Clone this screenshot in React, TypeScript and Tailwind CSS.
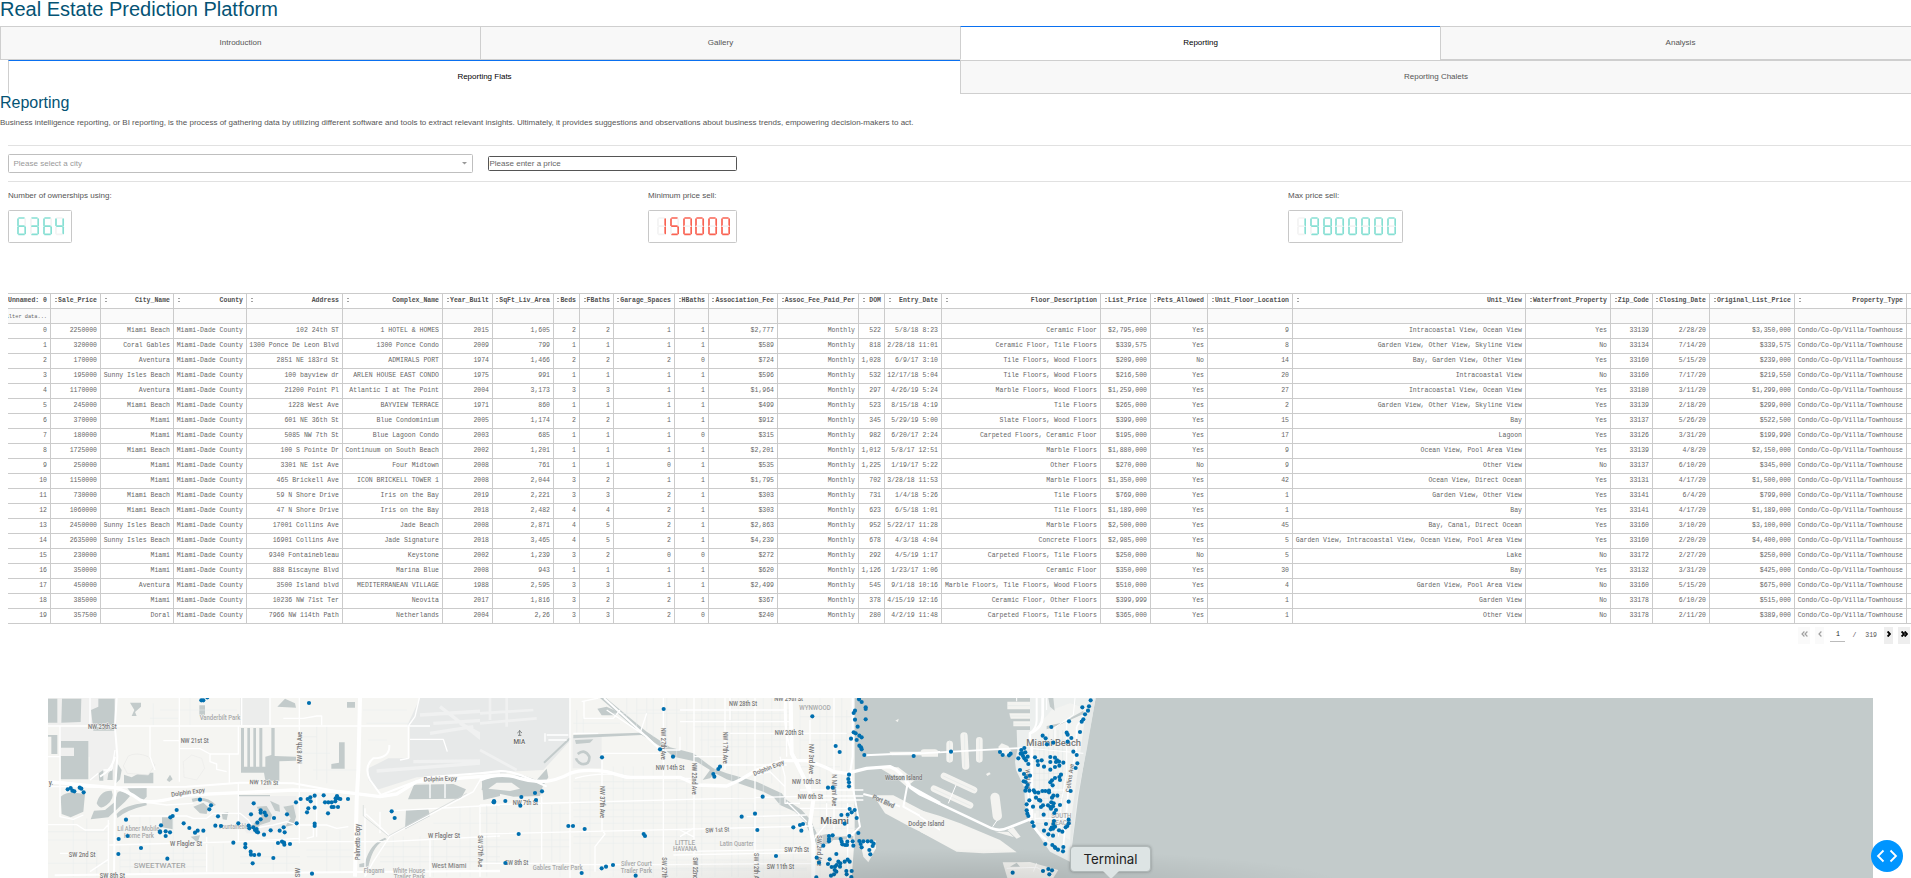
import type { ReactNode } from "react";

const COLUMNS: { name: string; width: number }[] = [
  { name: "Unnamed: 0", width: 43 },
  { name: "Sale_Price", width: 50 },
  { name: "City_Name", width: 73 },
  { name: "County", width: 73 },
  { name: "Address", width: 96 },
  { name: "Complex_Name", width: 100 },
  { name: "Year_Built", width: 50 },
  { name: "SqFt_Liv_Area", width: 61 },
  { name: "Beds", width: 26 },
  { name: "FBaths", width: 34 },
  { name: "Garage_Spaces", width: 61 },
  { name: "HBaths", width: 34 },
  { name: "Association_Fee", width: 69 },
  { name: "Assoc_Fee_Paid_Per", width: 81 },
  { name: "DOM", width: 26 },
  { name: "Entry_Date", width: 57 },
  { name: "Floor_Description", width: 159 },
  { name: "List_Price", width: 50 },
  { name: "Pets_Allowed", width: 57 },
  { name: "Unit_Floor_Location", width: 85 },
  { name: "Unit_View", width: 233 },
  { name: "Waterfront_Property", width: 85 },
  { name: "Zip_Code", width: 42 },
  { name: "Closing_Date", width: 57 },
  { name: "Original_List_Price", width: 85 },
  { name: "Property_Type", width: 112 },
];

const TYPE = "Condo/Co-Op/Villa/Townhouse";
const MD = "Miami-Dade County";

const ROWS: string[] = [
  `0|2250000|Miami Beach|${MD}|102 24th ST|1 HOTEL & HOMES|2015|1,605|2|2|1|1|$2,777|Monthly|522|5/8/18 8:23|Ceramic Floor|$2,795,000|Yes|9|Intracoastal View, Ocean View|Yes|33139|2/28/20|$3,350,000|${TYPE}`,
  `1|320000|Coral Gables|${MD}|1300 Ponce De Leon Blvd|1300 Ponce Condo|2009|799|1|1|1|1|$589|Monthly|818|2/28/18 11:01|Ceramic Floor, Tile Floors|$339,575|Yes|8|Garden View, Other View, Skyline View|No|33134|7/14/20|$339,575|${TYPE}`,
  `2|170000|Aventura|${MD}|2851 NE 183rd St|ADMIRALS PORT|1974|1,466|2|2|2|0|$724|Monthly|1,028|6/9/17 3:10|Tile Floors, Wood Floors|$209,000|No|14|Bay, Garden View, Other View|Yes|33160|5/15/20|$239,000|${TYPE}`,
  `3|195000|Sunny Isles Beach|${MD}|100 bayview dr|ARLEN HOUSE EAST CONDO|1975|991|1|1|1|1|$596|Monthly|532|12/17/18 5:04|Tile Floors, Wood Floors|$216,500|Yes|20|Intracoastal View|No|33160|7/17/20|$219,550|${TYPE}`,
  `4|1170000|Aventura|${MD}|21200 Point Pl|Atlantic I at The Point|2004|3,173|3|3|1|1|$1,964|Monthly|297|4/26/19 5:24|Marble Floors, Wood Floors|$1,259,000|Yes|27|Intracoastal View, Ocean View|Yes|33180|3/11/20|$1,299,000|${TYPE}`,
  `5|245000|Miami Beach|${MD}|1228 West Ave|BAYVIEW TERRACE|1971|860|1|1|1|1|$499|Monthly|523|8/15/18 4:19|Tile Floors|$265,000|Yes|2|Garden View, Other View, Skyline View|Yes|33139|2/18/20|$299,000|${TYPE}`,
  `6|370000|Miami|${MD}|601 NE 36th St|Blue Condominium|2005|1,174|2|2|1|1|$912|Monthly|345|5/29/19 5:00|Slate Floors, Wood Floors|$399,000|Yes|15|Bay|Yes|33137|5/26/20|$522,500|${TYPE}`,
  `7|180000|Miami|${MD}|5085 NW 7th St|Blue Lagoon Condo|2003|685|1|1|1|0|$315|Monthly|982|6/20/17 2:24|Carpeted Floors, Ceramic Floor|$195,000|Yes|17|Lagoon|Yes|33126|3/31/20|$199,990|${TYPE}`,
  `8|1725000|Miami Beach|${MD}|100 S Pointe Dr|Continuum on South Beach|2002|1,201|1|1|1|1|$2,201|Monthly|1,012|5/8/17 12:51|Marble Floors|$1,880,000|Yes|9|Ocean View, Pool Area View|Yes|33139|4/8/20|$2,150,000|${TYPE}`,
  `9|250000|Miami|${MD}|3301 NE 1st Ave|Four Midtown|2008|761|1|1|0|1|$535|Monthly|1,225|1/19/17 5:22|Other Floors|$270,000|No|9|Other View|No|33137|6/10/20|$345,000|${TYPE}`,
  `10|1150000|Miami|${MD}|465 Brickell Ave|ICON BRICKELL TOWER 1|2008|2,044|3|2|1|1|$1,795|Monthly|702|3/28/18 11:53|Marble Floors|$1,350,000|Yes|42|Ocean View, Direct Ocean|Yes|33131|4/17/20|$1,500,000|${TYPE}`,
  `11|730000|Miami Beach|${MD}|59 N Shore Drive|Iris on the Bay|2019|2,221|3|3|2|1|$303|Monthly|731|1/4/18 5:26|Tile Floors|$769,000|Yes|1|Garden View, Other View|Yes|33141|6/4/20|$799,000|${TYPE}`,
  `12|1060000|Miami Beach|${MD}|47 N Shore Drive|Iris on the Bay|2018|2,482|4|4|2|1|$303|Monthly|623|6/5/18 1:01|Tile Floors|$1,189,000|Yes|1|Bay|Yes|33141|4/17/20|$1,189,000|${TYPE}`,
  `13|2450000|Sunny Isles Beach|${MD}|17001 Collins Ave|Jade Beach|2008|2,871|4|5|2|1|$2,863|Monthly|952|5/22/17 11:28|Marble Floors|$2,500,000|Yes|45|Bay, Canal, Direct Ocean|Yes|33160|3/10/20|$3,100,000|${TYPE}`,
  `14|2635000|Sunny Isles Beach|${MD}|16901 Collins Ave|Jade Signature|2018|3,465|4|5|2|1|$4,239|Monthly|678|4/3/18 4:04|Concrete Floors|$2,985,000|Yes|5|Garden View, Intracoastal View, Ocean View, Pool Area View|Yes|33160|2/20/20|$4,400,000|${TYPE}`,
  `15|230000|Miami|${MD}|9340 Fontainebleau|Keystone|2002|1,239|3|2|0|0|$272|Monthly|292|4/5/19 1:17|Carpeted Floors, Tile Floors|$250,000|No|5|Lake|No|33172|2/27/20|$250,000|${TYPE}`,
  `16|350000|Miami|${MD}|888 Biscayne Blvd|Marina Blue|2008|943|1|1|1|1|$620|Monthly|1,126|1/23/17 1:06|Ceramic Floor|$350,000|Yes|30|Bay|Yes|33132|3/31/20|$425,000|${TYPE}`,
  `17|450000|Aventura|${MD}|3500 Island blvd|MEDITERRANEAN VILLAGE|1988|2,595|3|3|1|1|$2,499|Monthly|545|9/1/18 10:16|Marble Floors, Tile Floors, Wood Floors|$510,000|Yes|4|Garden View, Pool Area View|No|33160|5/15/20|$675,000|${TYPE}`,
  `18|385000|Miami|${MD}|10236 NW 71st Ter|Neovita|2017|1,816|3|2|2|1|$367|Monthly|378|4/15/19 12:16|Ceramic Floor, Other Floors|$399,999|Yes|1|Garden View|No|33178|6/10/20|$515,000|${TYPE}`,
  `19|357500|Doral|${MD}|7966 NW 114th Path|Netherlands|2004|2,26|3|3|2|0|$240|Monthly|280|4/2/19 11:48|Carpeted Floors, Tile Floors|$365,000|Yes|1|Other View|No|33178|2/11/20|$389,000|${TYPE}`,
];

const GRID = COLUMNS.map((c) => `${c.width}px`).join(" ") + " 4px";

function Cell({ children, head, filter }: { children?: ReactNode; head?: boolean; filter?: boolean }) {
  return (
    <div
      className={
        "flex h-[15px] items-center justify-end overflow-hidden border-r border-b border-[#cbcbcb] pr-[3px] whitespace-pre " +
        (head ? "font-bold text-[#505050]" : filter ? "bg-[#fafafa] pt-px text-[5.3px]" : "")
      }
    >
      {children}
    </div>
  );
}

function DataTable() {
  return (
    <div className="ml-2 overflow-hidden border-t border-[#cbcbcb] font-['Courier','Liberation_Mono',monospace] text-[6.5px] leading-[14px] text-[#666]">
      <div className="grid" style={{ gridTemplateColumns: GRID }}>
        {COLUMNS.map((c, i) => (
          <Cell key={c.name} head>
            {i > 0 && (
              <span className="-mt-[2px] mr-auto ml-1 flex w-[3px] shrink-0 flex-col gap-[2px]">
                <span className="h-px w-[2px] bg-[#a0a0a0]" />
                <span className="h-px w-[2px] bg-[#a0a0a0]" />
              </span>
            )}
            <span>{c.name}</span>
          </Cell>
        ))}
        <div className="border-b border-[#cbcbcb]" />
        {COLUMNS.map((c, i) => (
          <Cell key={c.name} filter>
            {i === 0 ? "filter data..." : ""}
          </Cell>
        ))}
        <div className="border-b border-[#cbcbcb] bg-[#fafafa]" />
      </div>
      {ROWS.map((r, i) => (
        <div key={i} className="grid" style={{ gridTemplateColumns: GRID }}>
          {r.split("|").map((v, j) => (
            <Cell key={j}>{v}</Cell>
          ))}
          <div className="border-b border-[#cbcbcb]" />
        </div>
      ))}
    </div>
  );
}

function Chevrons({ count, flip, color, weight }: { count: number; flip?: boolean; color: string; weight: number }) {
  return (
    <svg viewBox={`0 0 ${count * 3 + 1} 6`} width={count * 3 + 1} height={6} className={"-mt-1 " + (flip ? "-scale-x-100" : "")}>
      {Array.from({ length: count }, (_, i) => (
        <polyline key={i} points={`${i * 3 + 0.6},0.5 ${i * 3 + 3},3 ${i * 3 + 0.6},5.5`} fill="none" stroke={color} strokeWidth={weight} />
      ))}
    </svg>
  );
}

function Pager() {
  return (
    <div className="mr-px flex h-[17px] items-center justify-end font-['Courier','Liberation_Mono',monospace] text-[6.5px] text-[#555]">
      <span className="mr-[5px] flex h-[17px] w-3 items-center justify-center bg-[#fafafa]">
        <Chevrons count={2} flip color="#a0a0a0" weight={1.2} />
      </span>
      <span className="mr-[6px] flex h-[17px] w-[9px] items-center justify-center bg-[#fafafa]">
        <Chevrons count={1} flip color="#a0a0a0" weight={1.2} />
      </span>
      <span className="mr-[7px] h-[15px] w-[15px] self-start border-b border-[#bbb] pt-1 text-center leading-[8px] text-[#222]">1</span>
      <span className="mr-[9px]">/</span>
      <span className="mr-[7px]">319</span>
      <span className="mr-[5px] flex h-[17px] w-[9px] items-center justify-center bg-[#eee]">
        <Chevrons count={1} color="#000" weight={1.9} />
      </span>
      <span className="flex h-[17px] w-3 items-center justify-center bg-[#eee]">
        <Chevrons count={2} color="#000" weight={1.9} />
      </span>
    </div>
  );
}

// Segment order: top, top-right, bottom-right, bottom, bottom-left, top-left, middle.
const SEGMENTS: [number, number, number, number][] = [
  [2, 1, 7, 1],
  [8.2, 2, 8.2, 8.2],
  [8.2, 10.2, 8.2, 16.5],
  [2, 17.4, 7, 17.4],
  [1, 10.2, 1, 16.5],
  [1, 2, 1, 8.2],
  [2, 9.2, 7, 9.2],
];
const LIT: Record<string, string> = {
  "0": "1111110",
  "1": "0110000",
  "3": "1111001",
  "4": "0110011",
  "5": "1011011",
  "6": "1011111",
  "8": "1111111",
  "9": "1111011",
};

function Led({ label, value, color }: { label: string; value: string; color: string }) {
  return (
    <div className="flex w-[640px] shrink-0 flex-col items-start">
      <div className="text-[8px] leading-[14px] text-[#555]">{label}</div>
      <div className="mt-[7px] flex h-[33px] items-start gap-[3.65px] rounded-[1.5px] border border-[#c8c8c8] pt-[6px] pr-[6px] pl-[8px]" aria-label={value}>
        {value.split("").map((d, i) => (
          <svg key={i} width="9.2" height="18.5" viewBox="0 0 9.2 18.5">
            {SEGMENTS.map(([x1, y1, x2, y2], s) => (
              <line
                key={s}
                x1={x1}
                y1={y1}
                x2={x2}
                y2={y2}
                stroke={LIT[d][s] === "1" ? color : "#f3f3f3"}
                strokeWidth={1.7}
                strokeLinecap="round"
              />
            ))}
          </svg>
        ))}
      </div>
    </div>
  );
}

// Map geometry is drawn in three tiles, each with its own origin, at three units per pixel.
const WEST_DOTS =
  "484,31 490,31 502,22 807,39 83,298 92,294 97,302 103,304 119,293 124,296 131,307 480,329 513,346 508,358 410,360 398,378 391,382 258,389 363,406 360,424 360,427 377,424 390,427 377,438 263,438 236,447 235,492 303,474 382,506 431,400 448,414 473,422 465,428 490,422 526,407 543,408 534,379 595,400 580,458 616,462 616,472 632,485 633,494 643,495 657,494 638,520 700,504 641,340 633,373 662,361 662,368 674,368 678,376 662,388 652,398 626,407 628,415 640,412 645,420 650,417 650,425 654,427 672,434 692,421 702,384 741,373 731,412 719,422 734,427 714,459 726,455 732,458 733,464 750,462 770,400 768,337 782,327 803,327 811,322 812,334 824,317 805,355 824,353 801,367 851,316 855,337 865,337 875,337 886,334 891,318 895,325 901,327 887,325 924,327 875,351 881,351 894,351 864,370 824,401 824,408 816,551 1055,364 1064,384 1362,334 1361,337";
const CENTRAL_DOTS =
  "551,57 366,202 540,178 579,200 997,79 1067,168 1079,186 720,230 715,237 700,252 703,260 42,334 42,337 76,333 124,321 121,347 165,309 168,330 186,304 116,432 76,519 265,408 279,408 314,417 491,432 495,438 305,549 365,535 378,530 399,525 467,557 785,380 825,371 832,420 848,320 888,498 940,412 960,405 969,402 964,422 1044,293 1058,293 1107,254 1105,267 1107,277 1107,289 1137,28 1145,36 1157,52 1157,57 1125,62 1121,69 1125,89 1157,88 1133,110 1121,127 1127,130 1138,137 1145,142 1113,146 1130,150 1138,167 1143,172 1145,178 1153,195 1301,198 1109,357 1115,367 1124,360 1084,375 1103,374 1130,384 1094,401 1135,429 1108,438 1047,438 1058,436 1047,447 1047,454 1030,467 1082,447 1085,455 1087,463 1095,465 1102,455 1118,454 1120,467 1138,453 1142,462 1145,472 1150,454 1163,454 1174,454 1181,461 1178,468 1168,480 1171,493 1101,465 1010,503 1017,518 1009,562 1069,492 1049,508 1044,522 1055,531 1065,530 1070,525 1075,515 1081,520 1080,530 1064,540 1053,557 1062,553 1069,545 1094,515 1103,509 1109,515 1099,543 1100,553 1115,543 1114,561";
const BEACH_DOTS =
  "512,31 487,52 507,49 504,62 495,73 490,88 485,95 447,94 394,111 480,126 440,128 443,134 454,144 443,155 368,137 377,145 381,163 400,158 460,185 470,195 472,220 467,234 240,186 248,195 267,196 272,191 93,185 313,174 304,180 302,191 308,190 316,187 309,198 313,205 323,200 318,211 295,205 325,222 300,240 312,252 318,262 330,257 311,274 317,276 323,285 319,293 316,302 328,302 345,202 365,211 353,213 354,225 372,230 391,201 405,203 391,216 411,211 408,216 417,215 430,218 418,227 405,231 391,239 423,254 418,261 420,270 405,264 396,271 391,277 398,286 341,301 345,307 355,308 367,303 376,303 387,302 387,307 400,317 396,323 412,317 348,323 357,330 361,332 328,331 320,343 339,350 363,351 369,346 384,346 394,337 401,340 391,351 399,349 393,356 420,345 408,360 403,369 371,374 320,361 322,371 325,378 337,397 341,408 378,402 402,393 400,402 405,410 395,413 399,416 392,418 372,422 385,433 399,437 417,421 427,425 437,412 442,408 446,400 446,389 446,335 452,303 376,462 397,465 404,471 406,474 414,479 430,471 429,484 278,548 369,543 385,537 396,541 388,553";

function Dots({ points }: { points: string }) {
  return (
    <g fill="#006faf">
      {points.split(" ").map((p, i) => {
        const [x, y] = p.split(",");
        return <circle key={i} cx={x} cy={y} r={6.2} />;
      })}
    </g>
  );
}

function Label({ x, y, children, size = 19, color = "#777", r = 0, w, halo = "#f6f6f4" }: { x: number; y: number; children: string; size?: number; color?: string; r?: number; w?: number; halo?: string }) {
  return (
    <text
      x={x}
      y={y}
      transform={r ? `rotate(${r} ${x} ${y})` : undefined}
      textAnchor="middle"
      dominantBaseline="central"
      fontSize={size}
      fill={color}
      stroke={halo}
      strokeWidth={3}
      paintOrder="stroke"
      textLength={w}
      lengthAdjust="spacingAndGlyphs"
      fontWeight={500}
    >
      {children}
    </text>
  );
}

const LIGHT = "#a6a8a8";

function WestTile() {
  return (
    <g transform="translate(-24 0)">
      <g fill="#ecedec">
        <path d="M24 24H230V270H150V200H60V110H24Z" opacity=".6" />
        <path d="M600 24H688V105H600Z" />
        <path d="M1140 24H1400V250L1130 262 1010 300 985 270V235L1045 205H1110V110H1100Z" fill="#e7e9e9" />
        <path d="M600 318H770V400L700 430H620L590 380Z" opacity=".7" />
      </g>
      <g stroke="#f0f1f1" strokeWidth="10" fill="none">
        <path d="M1010 243L1380 215M1120 215L1380 212M1140 75L1380 60M1180 100L1380 88M1200 50L1380 190M1260 100L1380 165M1170 130L1300 110" />
      </g>
      <g fill="#c3cbcb">
        <path d="M24 26H52V98H24ZM66 26H124L122 96 64 98ZM153 60L175 50V26H224V122H160ZM24 135H52V192H34V140H24ZM63 153H145V268H62V198H102V173H63Z" />
        <path d="M270 38H303V50L285 66 290 78H275L283 60ZM478 46H495V76H478ZM712 50L735 26 765 40 768 53ZM921 36H945V53H921ZM897 157H914V236H874V222L897 218Z" />
        <path d="M603 114H612V230H622V114H630V230H640V114H648V230H658V114H667V230H676V200L694 195V114H704V198L768 200V212L718 214V272H676L672 248H603Z" />
        <path d="M252 254L275 262 300 248H340V280H252ZM232 220L245 240 240 268 228 280ZM176 250L190 240V272H178ZM205 250L218 236V270H202ZM380 270L390 254 398 268 388 276Z" />
        <path d="M62 320Q80 305 105 308L135 312 130 365 92 382 65 372ZM170 340Q180 300 215 302 225 325 200 345 180 362 170 340ZM262 294H320V320L308 332 280 318ZM232 308Q245 296 270 318L255 335 205 382 152 388 162 362 195 360 225 335Z" />
        <path d="M230 372Q250 345 320 338V346Q260 360 232 384ZM366 382H398V418L366 412ZM452 440L480 436 475 452 490 460 470 456ZM455 326Q500 315 528 345L520 348Q495 325 458 336ZM460 350L490 338 505 352 500 372 480 370ZM545 370L565 366 560 390 548 388Z" />
        <path d="M650 350L680 348 696 375 690 395 660 405 645 425 630 410 665 380ZM690 332L718 345 720 365 705 362ZM730 350L760 345 768 380 760 405 735 410 752 385ZM595 315H690V319H597Z" />
        <path d="M1122 284L1240 282 1278 298 1262 326 1104 328ZM1098 360L1165 358 1170 378 1095 418ZM1325 268L1380 262V318L1330 330ZM1040 448Q1000 460 985 530L958 532V522L975 518Q990 460 1035 443Z" />
      </g>
      <g fill="#f5f5f2">
        <path d="M265 198Q290 185 325 200L345 225 325 255 262 250 250 228Z" stroke="#e8e9e7" strokeWidth="2" />
        <path d="M430 215L455 195 485 205 494 235 470 270 432 262Z" stroke="#ebecea" strokeWidth="2" />
      </g>
      <g stroke="#e9edec" strokeWidth="1.5" fill="none">
        <path d="M330 85H415M340 40V105M450 24V105M360 60H590M830 105V270M860 105V280M780 140H830M780 190H870M820 240H950M970 60H1100M980 100H1110M985 150H1040M24 425H205M24 450H205M24 520H205M100 385V560M140 385V560M170 480V560M240 470V555M270 470V555M300 380V555M330 380V555M400 380V545M430 460V545M460 460V545M240 490H500M240 510H500M240 530H500M520 470V545M550 460V545M700 460V545M740 460V545M600 500H780M600 520H780M860 420V550M900 420V550M800 480H950M800 500H950M1060 440V560M1090 440V560M1140 440V560M1180 440V560M1220 440V560M1260 350V560M1290 350V560M1340 350V560M1020 470H1380M1020 500H1380M1020 515H1380M1180 400H1380" />
      </g>
      <g stroke="#fff" fill="none" strokeLinejoin="round">
        <path strokeWidth="4" d="M24 108H1170M60 108V380L100 388 130 375M150 24V108M418 24V275M330 108V200L345 240M24 200H60M370 152H495M418 176H480L510 192H595V108M510 192V215L530 222V238L560 245M605 24V105M778 24V460M690 24V105M730 85H790L830 78H845V105M1138 24L1125 80 1105 108V205L1080 210M1110 148H1210L1222 185M24 404H110L135 420H190L208 400M595 280V455M568 190V280M24 290H170M190 240H215L225 180M150 270L175 250M205 390V560M208 465L600 455 778 445M270 378H440L460 385H500L520 370H600L625 390 640 415 700 405 740 395 770 405H860L890 415 925 410M820 410V440L800 445M600 455H1040L1380 438M300 335L380 345 460 340M60 490H160M205 508L150 545M830 318V440M500 440V545M1062 362L1380 345M975 355V560M978 372L1020 410 1048 438M1020 430V365M1050 438L1000 515 975 560M1050 438L1300 305 1325 262M1170 282V325M1215 282V325M1320 345V560M970 545H1380M1170 438V560" />
        <path strokeWidth="6" d="M230 24L225 110 232 200 225 295 222 560M225 200Q215 240 180 260M24 275Q90 275 140 290L250 292 440 290 600 278 760 280 900 305 1010 318M1048 165Q1050 205 1000 205 970 230 990 270L1025 318M1010 320L1100 285 1160 262 1380 245M44 556L500 550 1380 542" />
        <path strokeWidth="10" d="M24 275Q120 285 220 293 260 300 300 330 330 345 440 315L600 308 760 300 900 305 1020 320 1070 312 1130 275 1380 255" />
        <path strokeWidth="12" d="M960 24L955 240 950 330 945 560" />
      </g>
      <path d="M970 345V378L1045 438 1280 310" stroke="#d2d7d7" strokeWidth="2" fill="none" />
      <Label x={540} y={84} color={LIGHT} w={122}>Vanderbilt Park</Label>
      <Label x={187} y={112} w={86}>NW 25th St</Label>
      <Label x={464} y={152} w={84}>NW 21st St</Label>
      <Label x={672} y={278} w={86} r={2}>NW 12th St</Label>
      <Label x={779} y={173} w={96} r={-90}>NW 87th Ave</Label>
      <Label x={444} y={307} w={102} r={-8}>Dolphin Expy</Label>
      <Label x={1201} y={267} w={100} r={-2}>Dolphin Expy</Label>
      <Label x={33} y={279}>y.</Label>
      <Label x={295} y={416} color={LIGHT} w={126}>Lil Abner Mobile</Label>
      <Label x={297} y={438} color={LIGHT} w={90}>Home Park</Label>
      <Label x={590} y={411} color={LIGHT} w={104}>Fountainebleau</Label>
      <Label x={438} y={461} w={96}>W Flagler St</Label>
      <Label x={126} y={494} w={80}>SW 2nd St</Label>
      <Label x={359} y={527} color={LIGHT} w={156}>SWEETWATER</Label>
      <Label x={217} y={558} w={76}>SW 8th St</Label>
      <Label x={953} y={456} w={108} r={-90}>Palmetto Expy</Label>
      <Label x={774} y={548} r={-90}>SW</Label>
      <Label x={1212} y={438} w={96}>W Flagler St</Label>
      <Label x={1320} y={484} w={96} r={90}>SW 57th Ave</Label>
      <Label x={1002} y={542} color={LIGHT} w={62}>Flagami</Label>
      <Label x={1107} y={542} color={LIGHT} w={96}>White House</Label>
      <Label x={1108} y={562} color={LIGHT} w={94}>Trailer Park</Label>
      <Label x={1227} y={527} color="#888" w={104}>West Miami</Label>
      <Dots points={WEST_DOTS} />
    </g>
  );
}

function CentralTile() {
  return (
    <g transform="translate(1296 0)">
      <path d="M0 24H268V155L190 240 0 250Z" fill="#e7e9e9" />
      <path d="M278 140H365V235H278Z" fill="#ecedec" />
      <path d="M0 70L160 60M0 100L170 85M30 24V90M80 24V110M0 180L110 240" stroke="#f0f1f1" strokeWidth="8" fill="none" />
      <g fill="#c3cbcb">
        <path d="M1163 24H1400V564H1115L1122 470 1150 462 1155 400 1190 335 1153 330V102H1163Z" />
        <path d="M200 236L205 262 188 290 180 318 100 320 5 300 8 272 50 258 130 256 170 270Z" />
        <path d="M352 56L380 50 414 66 410 76 365 76ZM285 150L340 148 330 158 288 162Z" />
        <path d="M360 24L378 24 500 125 570 172 640 190 700 235 740 250 830 275 905 310 920 330 965 360 992 390 1010 430 1000 440 985 420 975 395 945 365 900 345 880 320 850 305 740 268 705 250 690 265 668 270 690 240 650 215 580 200 550 175 485 135 280 145V135L480 128Z" />
        <path d="M1000 440L1040 432 1062 440 1120 438V448L1060 450 1045 462 1010 465Z" />
      </g>
      <path d="M192 218L270 145" stroke="#c3cbcb" strokeWidth="6" />
      <path d="M293 192Q315 175 328 200 330 225 305 222 290 215 288 205" stroke="#c3cbcb" strokeWidth="8" fill="none" />
      <g fill="#f4f4f1">
        <path d="M25 296L50 278 95 278 120 296 90 303Z" />
        <path d="M1140 452H1188V475L1165 517 1150 500Z" />
        <path d="M1180 316H1240L1400 400V464L1290 410 1215 370Z" />
        <path d="M1195 232H1255L1305 270 1280 290 1250 265ZM1228 185H1325V196H1235ZM1325 182H1374V200H1325Z" />
        <path d="M1246 92L1256 86 1254 96Z" />
      </g>
      <g stroke="#e9edec" strokeWidth="1.5" fill="none">
        <path d="M290 60V130M310 80V130M280 100H420M440 24V80M470 24V110M500 24V120M520 24V140M560 24V160M590 24V560M620 24V180M665 24V560M685 24V200M705 24V560M755 24V560M775 24V560M800 24V240M850 24V560M875 24V280M900 24V560M960 24V320M1020 24V560M1040 60V420M1085 24V420M1100 60V330M470 60H930M400 70H930M620 90H930M640 110H930M660 150H930M690 170H930M280 275H640M280 295H640M280 340H900M280 360H920M280 380H960M280 400H980M280 440H980M280 460H980M20 345V520M50 345V520M150 345V520M215 345V520M240 345V560M300 280V520M330 280V560M400 230V560M430 230V560M460 230V560M490 230V560M520 230V560M280 540H980M560 510H980M560 535H980M960 80H1120M960 150H1120M960 230H1080M0 470H270M0 370H270M0 450H270M950 340H1130M970 360H1130M990 380H1130M1000 415H1130M620 280V480M820 340V560M940 400V560" />
      </g>
      <g stroke="#fff" fill="none" strokeLinejoin="round">
        <path strokeWidth="4" d="M270 24V564M280 130L355 130M200 135H265M205 150H260M195 130V155M305 35L355 24M312 35V85H400L420 60M642 24V560M735 24V240M825 24V560M918 24L920 200M990 90V300M1062 24V420M366 190V420L375 432 345 470V545M550 24V564M185 320V510M380 60L500 140 540 178M500 70L480 130M555 180H600V140M366 190H540M0 345L1000 318 1150 318M0 432L600 418 1000 408M280 524H560L1000 520M0 520H280M600 95H930M750 130H1100M735 225H920M900 200L915 260V340H960M750 24V90M470 265H640M285 265Q380 240 470 265M600 440L640 415M600 420L640 440M830 255L870 245 915 290M920 335L980 395M1000 450L1040 400V340M580 485L980 478M580 495L980 488M960 300H1150M960 330H1150M960 355H1130M1000 440V564M800 380L980 375M1103 340V564M640 200H730M600 60H920" />
        <path strokeWidth="6" d="M372 24L540 178M1118 24V200L1110 250 1120 300 1140 410 1110 440M0 250L60 243Q100 240 200 290M1155 196L1380 186M1282 285L1270 350L1360 400M1150 312L1200 325 1260 350M915 24Q910 130 935 185L960 230" />
        <path strokeWidth="10" d="M0 270Q60 245 120 265 200 290 270 250 310 235 380 245L440 262 600 262 650 285 740 288 780 270 830 240 910 212 980 212Q1040 230 1060 245L1100 250 1160 235 1230 230Q1260 240 1290 290L1380 340" />
        <path strokeWidth="12" d="M932 24L935 190 970 260 1000 330 990 400 1000 460V564" />
      </g>
      <path d="M112 129L119 123 126 129M119 120V136M114 136H124" stroke="#6f7272" strokeWidth="2.500" fill="none" />
      <Label x={118} y={156} w={35} color="#666">MIA</Label>
      <Label x={789} y={43} w={84}>NW 28th St</Label>
      <Label x={926} y={27} w={86}>NW 29th St</Label>
      <Label x={1005} y={53} w={94} color={LIGHT}>WYNWOOD</Label>
      <Label x={927} y={129} w={86}>NW 20th St</Label>
      <Label x={549} y={161} w={96} r={90}>NW 27th Ave</Label>
      <Label x={735} y={173} w={96} r={90}>NW 17th Ave</Label>
      <Label x={994} y={207} w={90} r={90}>NW 3rd Ave</Label>
      <Label x={643} y={266} w={96} r={90}>NW 22nd Ave</Label>
      <Label x={570} y={233} w={86}>NW 14th St</Label>
      <Label x={866} y={234} w={98} r={-22}>Dolphin Expy</Label>
      <Label x={979} y={275} w={86}>NW 10th St</Label>
      <Label x={1062} y={301} w={96} r={90}>N Miami Ave</Label>
      <Label x={991} y={322} w={76}>NW 6th St</Label>
      <Label x={366} y={336} w={96} r={90}>NW 37th Ave</Label>
      <Label x={136} y={338} w={76}>NW 7th St</Label>
      <Label x={712} y={420} w={72} r={-3}>SW 1st St</Label>
      <Label x={615} y={458} w={60} color={LIGHT}>LITTLE</Label>
      <Label x={615} y={478} w={72} color={LIGHT}>HAVANA</Label>
      <Label x={770} y={462} w={102} color={LIGHT}>Latin Quarter</Label>
      <Label x={950} y={481} w={74}>SW 7th St</Label>
      <Label x={901} y={531} w={82}>SW 11th St</Label>
      <Label x={110} y={520} w={70}>SW 8th St</Label>
      <Label x={233} y={535} w={150} color={LIGHT}>Gables Trailer Park</Label>
      <Label x={469} y={521} w={92} color={LIGHT}>Silver Court</Label>
      <Label x={469} y={542} w={94} color={LIGHT}>Trailer Park</Label>
      <Label x={553} y={550} w={96} r={90}>SW 27th Ave</Label>
      <Label x={645} y={550} w={96} r={90}>SW 22nd Ave</Label>
      <Label x={829} y={537} w={96} r={90}>SW 12th Ave</Label>
      <Label x={1018} y={482} w={92} r={90}>SW 2nd Ave</Label>
      <Label x={1064} y={391} size={28} color="#666" w={86}>Miami</Label>
      <Label x={1210} y={334} w={70} r={25} halo="#d5dada">Port Blvd</Label>
      <Label x={1271} y={264} w={112} halo="#d5dada">Watson Island</Label>
      <Dots points={CENTRAL_DOTS} />
    </g>
  );
}

function BeachTile() {
  return (
    <g transform="translate(2616 0)">
      <g fill="#f3f3f0">
        <path d="M290 120H330V24H527L500 170 475 320 450 515 390 485 345 420 318 375 312 290 288 240 285 215 292 180Z" fill="#ecefee" />
        <path d="M262 35H330V58H262ZM268 70H330V86H272ZM280 94H330V109H280Z" />
        <path d="M235 170L245 160 265 168 278 190 265 200 240 190Z" />
        <path d="M60 378L120 400 240 450 290 487 190 490 110 485 0 425 0 360Z" />
        <path d="M262 420L280 412 302 440 290 446ZM225 425L265 425 282 442Z" />
        <path d="M248 517L330 516 415 540 400 564H262Z" />
        <path d="M198 252L208 247 212 252 202 258Z" />
      </g>
      <g stroke="#f3f3f0" strokeLinecap="round" fill="none">
        <path strokeWidth="20" d="M89 162V208M178 151V208M72 258L162 300M42 296L150 346M12 188H44" />
        <path strokeWidth="22" d="M132 138L137 228" />
        <path strokeWidth="28" d="M225 322L232 378" />
      </g>
      <path d="M395 60L450 40 515 60 490 180 470 300 450 450 340 390 335 130Z" fill="#f4f4f1" opacity=".8" />
      <g fill="#c3cbcb">
        <path d="M385 24H400L404 62 390 50ZM455 82L490 62V72L410 108 380 118V108L440 95ZM270 530L290 518 300 530Z" />
      </g>
      <path d="M500 50L527 24 500 180 470 330 450 515 452 400 475 230Z" fill="#e6e9e8" />
      <g stroke="#dfe5e4" strokeWidth="1.5" fill="none">
        <path d="M345 170V370M358 170V380M372 130V400M386 130V420M400 120V440M414 120V440M428 120V420M340 150H440M340 180H440M340 215H440M340 250H435M340 270H435M340 310H430M340 325H430M340 340H430M340 360H425M340 400H430M350 430H425M262 47H330M268 78H330M280 102H330M89 150V215M178 145V215M134 132V232M70 258L165 302M40 296L152 348" />
      </g>
      <g stroke="#fff" fill="none" strokeLinejoin="round">
        <path strokeWidth="3" d="M290 24V34M108 285L85 340M232 390L218 410M380 24V60M465 24L460 75 405 112V150M440 95V250L425 330 415 440M330 300L450 300M330 175L490 190M345 385H445M260 535L350 532 400 560M345 370V420L400 470M350 520L340 545" />
        <path strokeWidth="5" d="M0 190L305 174M470 110L468 180 445 300 430 470M495 70L470 110M320 240L330 390M0 380L60 420" />
        <path strokeWidth="8" d="M-30 292L0 313 215 415Q240 425 265 413L330 388M330 388Q350 430 380 450M330 170V130Q368 115 368 75V24M335 150V385" />
        <path strokeWidth="6" d="M350 24V90Q350 115 330 130" />
      </g>
      <Label x={401} y={159} size={26} color="#777" w={164}>Miami Beach</Label>
      <Label x={450} y={264} w={86} r={-82}>Collins Ave</Label>
      <Label x={324} y={268} w={60} r={85}>West Ave</Label>
      <Label x={424} y={379} color={LIGHT} w={60}>SOUTH</Label>
      <Label x={424} y={399} color={LIGHT} w={60}>BEACH</Label>
      <Label x={19} y={401} w={108}>Dodge Island</Label>
      <Dots points={BEACH_DOTS} />
    </g>
  );
}

function CityMap() {
  return (
    <svg className="block font-['Roboto','Liberation_Sans',sans-serif]" width="1825" height="180" viewBox="0 24 5475 540">
      <defs>
        <radialGradient id="dock">
          <stop offset="0" stopColor="#000" stopOpacity=".13" />
          <stop offset="1" stopColor="#000" stopOpacity="0" />
        </radialGradient>
      </defs>
      <rect x="0" y="24" width="5475" height="540" fill="#c3cbcb" />
      <rect x="0" y="24" width="2420" height="540" fill="#f5f5f2" />
      <WestTile />
      <CentralTile />
      <BeachTile />
      <ellipse cx="2750" cy="585" rx="1150" ry="110" fill="url(#dock)" />
    </svg>
  );
}

function Tab({ label, active }: { label: string; active?: boolean }) {
  return (
    <div
      className={
        "flex items-center justify-center border-t border-b border-l text-[8px] leading-[10px] " +
        (active
          ? "border-t-[#0a70f0] border-b-white border-l-[#cfcfcf] bg-white text-black"
          : "border-[#cfcfcf] bg-[#f8f8f8] text-[#555]")
      }
    >
      {label}
    </div>
  );
}

export default function App() {
  return (
    <div className="relative h-[878px] w-[1911px] overflow-hidden bg-white font-['Liberation_Sans',Arial,sans-serif] text-[#555]">
      <h1 className="h-[26px] text-[20px] leading-[18px] text-[#045374]">Real Estate Prediction Platform</h1>
      <div className="grid h-[34px] grid-cols-[480px_480px_480px_480px]">
        <Tab label="Introduction" />
        <Tab label="Gallery" />
        <Tab label="Reporting" active />
        <Tab label="Analysis" />
      </div>
      <div className="ml-2 grid h-[34px] grid-cols-[952px_951px]">
        <Tab label="Reporting Flats" active />
        <Tab label="Reporting Chalets" />
      </div>
      <h2 className="h-[22px] text-[16px] leading-[18px] text-[#045374]">Reporting</h2>
      <p className="h-[29px] text-[8px] leading-[13px] whitespace-nowrap">
        Business intelligence reporting, or BI reporting, is the process of gathering data by utilizing different software and tools to extract relevant insights. Ultimately, it provides suggestions and observations about business trends, empowering decision-makers to act.
      </p>
      <div className="ml-2 flex h-[37px] items-start border-t border-b border-[#e1e1e1] pt-2 text-[8px]">
        <div className="flex h-[19px] w-[465px] items-center justify-between rounded-[1.5px] border border-[#bfbfbf] pr-[5px] pl-[4.5px] leading-[17px] text-[#999]">
          <span>Please select a city</span>
          <svg width="5" height="3" viewBox="0 0 5 3">
            <polygon points="0,0 5,0 2.5,2.6" fill="#999" />
          </svg>
        </div>
        <div className="mt-[2px] ml-[15px] h-[15px] w-[249px] rounded-[1.5px] border border-[#555] pl-[0.5px] leading-[13px] text-[#666]">Please enter a price</div>
      </div>
      <div className="ml-2 flex h-[111px] pt-[7px]">
        <Led label="Number of ownerships using:" value="6364" color="#86dfd3" />
        <Led label="Minimum price sell:" value="150000" color="#f96353" />
        <Led label="Max price sell:" value="19800000" color="#86dfd3" />
      </div>
      <DataTable />
      <div className="h-[71px] pt-[3px]">
        <Pager />
      </div>
      <div className="mt-[3px] ml-12 w-[1825px]">
        <CityMap />
      </div>

      <div className="absolute top-[846px] left-[1070px] flex h-[26px] w-[81px] items-center justify-center rounded-[4px] border border-[#b0b8b8] bg-[#dde4e4] pt-[2px] font-['Inter','Liberation_Sans',sans-serif] text-[13.3px] text-[#222] shadow-[0_0_3px_rgba(0,0,0,0.3)]">
        Terminal
      </div>
      <svg className="absolute top-[871px] left-[1103px]" width="16" height="7" viewBox="0 0 16 7">
        <polygon points="0,0 16,0 9,7 7,7" fill="#dde4e4" />
      </svg>
      <div className="absolute top-[840px] left-[1871px] flex size-8 items-center justify-center rounded-full bg-[#0095ff]">
        <svg width="22" height="14" viewBox="0 0 22 14" fill="none" stroke="#fff" strokeWidth="1.8">
          <path d="M7.500 1.500L2 7L7.500 12.500M14.500 1.500L20 7L14.500 12.500" />
        </svg>
      </div>
    </div>
  );
}
